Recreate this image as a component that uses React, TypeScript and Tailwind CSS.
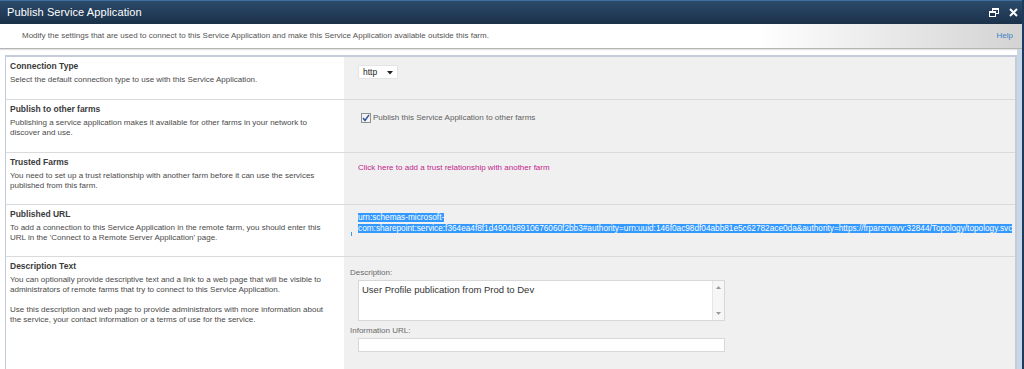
import React from "react";

const F = { fontFamily: '"Liberation Sans", Arial, sans-serif' };

function Row({
  title,
  children,
  right,
  h,
}: {
  title: string;
  children: React.ReactNode;
  right: React.ReactNode;
  h: string;
}) {
  return (
    <div className={`grid grid-cols-[338px_1fr] border-b border-[#dadada] ${h}`}>
      <div className="bg-white pl-[4px] pt-[4px] pr-2">
        <div className="text-[8.5px] leading-[10px] font-bold text-[#3b3b3b]">{title}</div>
        <div className="mt-[4px] text-[8px] leading-[10px] text-[#4a4a4a]">{children}</div>
      </div>
      <div className="bg-[#f0f0f0] relative">{right}</div>
    </div>
  );
}

export default function App() {
  return (
    <div className="w-[1024px] h-[369px] overflow-hidden bg-white relative" style={F}>
      {/* title bar */}
      <div className="h-[24px] border-t border-[#3f6f9f] bg-gradient-to-b from-[#2c4a6b] to-[#1b3149] flex items-center justify-between pl-[7px] pr-[6px]">
        <span className="text-white text-[11px] tracking-[0.1px]">Publish Service Application</span>
        <div className="flex items-center gap-[10px]">
          <svg width="10" height="9" viewBox="0 0 10 9">
            <rect x="3.5" y="0.5" width="6" height="5" fill="none" stroke="#fff" />
            <rect x="0.5" y="3.5" width="6" height="5" fill="#1e3550" stroke="#fff" />
            <rect x="3.5" y="0.5" width="6" height="1.5" fill="#fff" />
            <rect x="0.5" y="3.5" width="6" height="1.5" fill="#fff" />
          </svg>
          <svg width="9" height="9" viewBox="0 0 9 9">
            <path d="M1 1 L8 8 M8 1 L1 8" stroke="#fff" strokeWidth="2" />
          </svg>
        </div>
      </div>
      <div className="absolute right-0 top-0 w-[2px] h-[369px] bg-[#1c3a5e]" />
      {/* description strip */}
      <div className="h-[25px] border-b border-[#b5b5b5] bg-[linear-gradient(to_right,#ffffff_0%,#ffffff_74%,#d3d3d3_100%)] flex items-center justify-between pl-[22px] pr-[9px] mr-[2px] shadow-[0_1px_1px_#e2e2e2]">
        <span className="text-[8px] text-[#555]">
          Modify the settings that are used to connect to this Service Application and make this Service Application available outside this farm.
        </span>
        <span className="text-[8px] text-[#3a7fc4]">Help</span>
      </div>
      {/* form */}
      <div className="mt-[6px] ml-[5px] w-[1012px] border-t-2 border-l border-r-2 border-[#c3ccd8] h-[320px] bg-[#f0f0f0]">
        <Row title="Connection Type" h="h-[43px]" right={
          <div className="absolute left-[14px] top-[8px] w-[40px] h-[14px] bg-white border border-[#e4e4e4] flex items-center pl-[4px] text-[8.5px] text-[#222]">
            http
            <svg className="absolute right-[4px] top-[5px]" width="6" height="4" viewBox="0 0 6 4"><path d="M0 0 H6 L3 3.5 Z" fill="#222" /></svg>
          </div>
        }>
          Select the default connection type to use with this Service Application.
        </Row>
        <Row title="Publish to other farms" h="h-[53px]" right={
          <div className="absolute left-[17px] top-[12px] flex items-center gap-[2px]">
            <div className="w-[10px] h-[10px] border border-[#8f8f8f] bg-[#f4f4f4] flex items-center justify-center">
              <svg width="8" height="8" viewBox="0 0 8 8"><path d="M1 4 L3 6.5 L7 0.8" stroke="#2b4fa0" strokeWidth="1.4" fill="none" /></svg>
            </div>
            <span className="text-[8px] text-[#5f5f5f]">Publish this Service Application to other farms</span>
          </div>
        }>
          Publishing a service application makes it available for other farms in your network to
          <br />discover and use.
        </Row>
        <Row title="Trusted Farms" h="h-[52px]" right={
          <div className="absolute left-[14px] top-[9px] text-[8px] text-[#c2258e]">
            Click here to add a trust relationship with another farm
          </div>
        }>
          You need to set up a trust relationship with another farm before it can use the services
          <br />published from this farm.
        </Row>
        <Row title="Published URL" h="h-[52px]" right={
          <>
            <div className="absolute left-[14px] top-[7px] text-[8.25px] leading-[11px] text-white whitespace-nowrap">
              <span className="bg-[#3399ff]">urn:schemas-microsoft-</span>
              <br />
              <span className="bg-[#3399ff]">com:sharepoint:service:f364ea4f8f1d4904b8910676060f2bb3#authority=urn:uuid:146f0ac98df04abb81e5c62782ace0da&amp;authority=https://frparsrvavv:32844/Topology/topology.svc</span>
            </div>
            <div className="absolute left-[7px] top-[27px] w-[1px] h-[4px] bg-[#3399ff]" />
          </>
        }>
          To add a connection to this Service Application in the remote farm, you should enter this
          <br />URL in the 'Connect to a Remote Server Application' page.
        </Row>
        <div className="grid grid-cols-[338px_1fr] h-[120px]">
          <div className="bg-white pl-[4px] pt-[4px] pr-2">
            <div className="text-[8.5px] leading-[10px] font-bold text-[#3b3b3b]">Description Text</div>
            <div className="mt-[4px] text-[8px] leading-[10px] text-[#4a4a4a]">
              You can optionally provide descriptive text and a link to a web page that will be visible to
              <br />administrators of remote farms that try to connect to this Service Application.
              <div className="h-[10px]" />
              Use this description and web page to provide administrators with more information about
              <br />the service, your contact information or a terms of use for the service.
            </div>
          </div>
          <div className="bg-[#f0f0f0] pl-[6px] pt-[11px]">
            <div className="text-[8px] leading-[10px] text-[#6a6a6a]">Description:</div>
            <div className="ml-[8px] mt-[2px] w-[367px] h-[41px] bg-white border border-[#d8d8d8] flex">
              <div className="flex-1 pl-[3px] pt-[2px] text-[9.5px] text-[#333]">User Profile publication from Prod to Dev</div>
              <div className="w-[12px] border-l border-[#e6e6e6] bg-[#f6f6f6] flex flex-col items-center justify-between py-[5px]">
                <svg width="5" height="3" viewBox="0 0 5 3"><path d="M0 3 L2.5 0 L5 3 Z" fill="#9a9a9a" /></svg>
                <svg width="5" height="3" viewBox="0 0 5 3"><path d="M0 0 L5 0 L2.5 3 Z" fill="#9a9a9a" /></svg>
              </div>
            </div>
            <div className="mt-[5px] text-[8px] leading-[10px] text-[#6a6a6a]">Information URL:</div>
            <div className="ml-[8px] mt-[2px] w-[367px] h-[14px] bg-white border border-[#d8d8d8]" />
          </div>
        </div>
      </div>
      <div className="absolute right-[2px] top-[49px] w-[5px] h-[320px] bg-[#c8d6e6]" />
    </div>
  );
}
